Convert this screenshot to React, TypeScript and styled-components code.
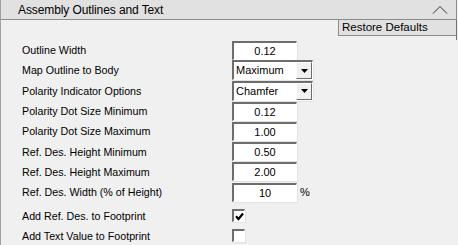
import styled, { createGlobalStyle } from "styled-components";

const GlobalStyle = createGlobalStyle`
  html, body {
    margin: 0;
    padding: 0;
    background: #f0f0f0;
  }
  body {
    font-family: "Liberation Sans", Arial, sans-serif;
    font-size: 11px;
    color: #000;
  }
`;

type Field =
  | { kind: "text"; label: string; value: string; suffix?: string }
  | { kind: "select"; label: string; value: string }
  | { kind: "check"; label: string; checked: boolean };

const fields: Field[] = [
  { kind: "text", label: "Outline Width", value: "0.12" },
  { kind: "select", label: "Map Outline to Body", value: "Maximum" },
  { kind: "select", label: "Polarity Indicator Options", value: "Chamfer" },
  { kind: "text", label: "Polarity Dot Size Minimum", value: "0.12" },
  { kind: "text", label: "Polarity Dot Size Maximum", value: "1.00" },
  { kind: "text", label: "Ref. Des. Height Minimum", value: "0.50" },
  { kind: "text", label: "Ref. Des. Height Maximum", value: "2.00" },
  { kind: "text", label: "Ref. Des. Width (% of Height)", value: "10", suffix: "%" },
  { kind: "check", label: "Add Ref. Des. to Footprint", checked: true },
  { kind: "check", label: "Add Text Value to Footprint", checked: false },
];

const App = () => {
  return (
    <>
      <GlobalStyle />
      <Panel>
        <Header>
          <Title>Assembly Outlines and Text</Title>
          <Chevron width="16" height="10" viewBox="0 0 16 10">
            <path d="M1 8.5 L8 1.5 L15 8.5" fill="none" stroke="#333" strokeWidth="1" />
          </Chevron>
        </Header>
        <Toolbar>
          <RestoreButton>Restore Defaults</RestoreButton>
        </Toolbar>
        <Form>
          {fields.map((f) => (
            <Row key={f.label} $check={f.kind === "check"}>
              <Label>{f.label}</Label>
              <Control>
                {f.kind === "text" && (
                  <>
                    <TextBox>{f.value}</TextBox>
                    {f.suffix && <Suffix>{f.suffix}</Suffix>}
                  </>
                )}
                {f.kind === "select" && (
                  <SelectBox>
                    <SelectValue>{f.value}</SelectValue>
                    <DropButton>
                      <svg width="7" height="4" viewBox="0 0 7 4">
                        <path d="M0 0 H7 L3.5 4 Z" fill="#000" />
                      </svg>
                    </DropButton>
                  </SelectBox>
                )}
                {f.kind === "check" && (
                  <CheckBox>
                    {f.checked && (
                      <svg width="9" height="9" viewBox="0 0 9 9">
                        <path d="M1 4.2 L3.5 7 L8 1.5" fill="none" stroke="#000" strokeWidth="2.2" />
                      </svg>
                    )}
                  </CheckBox>
                )}
              </Control>
            </Row>
          ))}
        </Form>
      </Panel>
    </>
  );
};

const Panel = styled.div`
  width: 458px;
  height: 245px;
  box-sizing: border-box;
  border-left: 1px solid #a0a0a0;
  overflow: hidden;
`;

const Header = styled.div`
  height: 20px;
  box-sizing: border-box;
  background: #e1e1e1;
  border: 1px solid #8c8c8c;
  border-top: none;
  margin-left: -1px;
  margin-right: 1px;
  display: flex;
  align-items: center;
  justify-content: space-between;
  padding-left: 17px;
  padding-right: 8px;
`;

const Title = styled.span`
  font-size: 12px;
  color: #000;
  letter-spacing: -0.1px;
`;

const Chevron = styled.svg`
  display: block;
  margin-top: 1px;
`;

const Toolbar = styled.div`
  display: flex;
  justify-content: flex-end;
  margin-right: 1px;
  border-right: 1px solid #6e6e6e;
  height: 20px;
`;

const RestoreButton = styled.div`
  width: 118px;
  height: 16px;
  box-sizing: border-box;
  background: #e1e1e1;
  border: 1px solid #8c8c8c;
  border-top: none;
  border-right: none;
  font-size: 11.5px;
  line-height: 15px;
  padding-left: 3px;
`;

const Form = styled.div`
  display: flex;
  flex-direction: column;
  padding-left: 21px;
`;

const Row = styled.div<{ $check: boolean }>`
  display: grid;
  grid-template-columns: 210px auto;
  align-items: center;
  height: ${(p) => (p.$check ? "20px" : "20.3px")};
  &:nth-child(9) {
    margin-top: 3.5px;
  }
`;

const Label = styled.span`
  font-size: 10.7px;
  white-space: nowrap;
`;

const Control = styled.div`
  display: flex;
  align-items: center;
  gap: 3px;
`;

const sunken = `
  box-sizing: border-box;
  background: #fff;
  border-top: 2px solid #6d6d6d;
  border-left: 2px solid #6d6d6d;
  border-bottom: 1px solid #fff;
  border-right: 1px solid #fff;
  box-shadow: 1px 1px 0 #e3e3e3;
`;

const TextBox = styled.div`
  ${sunken}
  width: 65px;
  height: 19px;
  text-align: center;
  line-height: 16px;
  font-size: 11px;
  color: #000;
`;

const Suffix = styled.span`
  font-size: 11px;
`;

const SelectBox = styled.div`
  ${sunken}
  width: 81px;
  height: 20px;
  display: flex;
  align-items: stretch;
  justify-content: space-between;
`;

const SelectValue = styled.span`
  padding-left: 2px;
  line-height: 17px;
  font-size: 11px;
`;

const DropButton = styled.div`
  width: 16px;
  box-sizing: border-box;
  background: #f0f0f0;
  border-top: 1px solid #fff;
  border-left: 1px solid #fff;
  border-right: 1px solid #6d6d6d;
  border-bottom: 1px solid #6d6d6d;
  display: flex;
  align-items: center;
  justify-content: center;
`;

const CheckBox = styled.div`
  ${sunken}
  width: 13px;
  height: 13px;
  display: flex;
  align-items: center;
  justify-content: center;
`;

export default App;
